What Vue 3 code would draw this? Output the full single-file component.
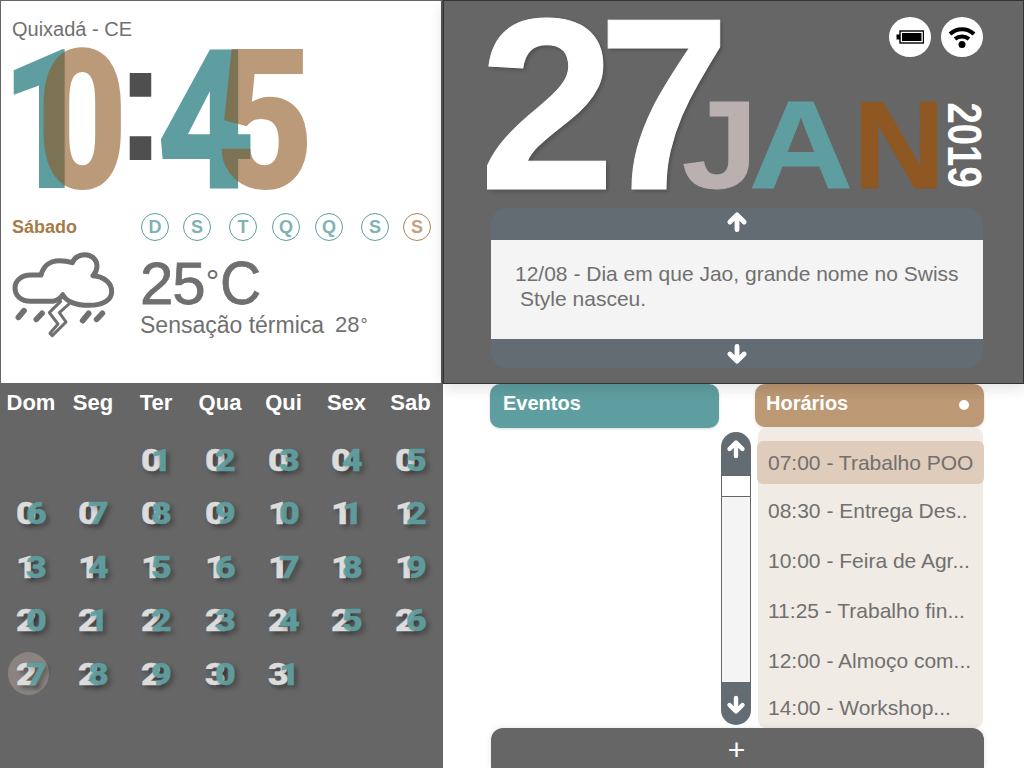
<script setup>
const clock = [
  { t: '1', c: 'teal w1' },
  { t: '0', c: 'tan w0' },
  { t: ':', c: 'colon' },
  { t: '4', c: 'teal w4' },
  { t: '5', c: 'tan w5' }
]
const days = [
  { t: 'D' }, { t: 'S' }, { t: 'T', wide: true }, { t: 'Q', mid: true },
  { t: 'Q', mid: true }, { t: 'S', wide: true }, { t: 'S', on: true }
]
const heads = ['Dom', 'Seg', 'Ter', 'Qua', 'Qui', 'Sex', 'Sab']
const cells = [null, null]
for (let i = 1; i <= 31; i++) cells.push(String(i).padStart(2, '0'))
const events = [
  '07:00 - Trabalho POO',
  '08:30 - Entrega Des..',
  '10:00 - Feira de Agr...',
  '11:25 - Trabalho fin...',
  '12:00 - Almoço com...',
  '14:00 - Workshop...'
]
</script>

<template>
  <div class="app">
    <section class="clock-panel">
      <div class="city">Quixadá - CE</div>
      <div class="clock">
        <span v-for="(d, i) in clock" :key="i" class="cd" :class="d.c"><span class="g">{{ d.t }}</span></span>
      </div>
      <div class="week">
        <span class="today">Sábado</span>
        <div class="days">
          <span v-for="(d, i) in days" :key="i" class="day" :class="{ wide: d.wide, mid: d.mid, on: d.on }">{{ d.t }}</span>
        </div>
      </div>
      <div class="weather">
        <svg class="storm" viewBox="0 0 390 300" width="130" height="100" fill="none" stroke="#707070" stroke-linecap="round" stroke-linejoin="round">
          <path stroke-width="15" d="M158 178H92C62 178 45 160 45 138C45 115 66 99 92 99H123C130 72 150 56 178 56C192 56 205 58 217 62C225 44 240 38 255 38C277 38 291 55 291 72C291 83 287 92 279 101C312 103 335 123 335 149C335 174 308 190 268 190C228 190 200 178 188 158C182 168 172 175 158 178Z"/>
          <path stroke-width="9" d="M182 178L148 212L174 246L150 274L157 281L198 240L178 212L207 186"/>
          <path stroke-width="17" d="M55 226L72 206M109 232L126 214M248 236L266 214M290 232L307 214"/>
        </svg>
        <div class="temps">
          <div class="temp">25<span class="deg">°</span><span class="cel">C</span></div>
          <div class="feel"><span>Sensação térmica</span><span class="feel-v">28<span class="feel-d">°</span></span></div>
        </div>
      </div>
    </section>

    <section class="date-panel">
      <div class="date-row">
        <div class="dn"><span class="dn-g">2</span><span class="dn-g sev">7</span></div>
        <div class="date-side">
          <div class="status">
            <span class="badge">
              <svg viewBox="0 0 28 14" width="28" height="14">
                <rect x="4" y="1" width="23.5" height="12" fill="none" stroke="#000" stroke-width="1.4"/>
                <rect x="6" y="3" width="19.5" height="8" fill="#000"/>
                <rect x="0.5" y="4.5" width="3.5" height="5" fill="#000"/>
              </svg>
            </span>
            <span class="badge">
              <svg viewBox="0 0 28 22" width="28" height="22" fill="none" stroke="#000" stroke-width="4">
                <path d="M2 8C9 1.5 19 1.5 26 8"/>
                <path d="M7 13C11 9.5 17 9.5 21 13"/>
                <circle cx="14" cy="18.5" r="3.5" fill="#000" stroke="none"/>
              </svg>
            </span>
          </div>
          <div class="month-row">
            <span class="m j"><span class="mg">J</span></span><span class="m a"><span class="mg">A</span></span><span class="m n"><span class="mg">N</span></span>
            <span class="year">2019</span>
          </div>
        </div>
      </div>
      <div class="note">
        <div class="note-bar top">
          <svg viewBox="0 0 20 20" width="22" height="22" fill="none" stroke="#fff" stroke-width="4.4" stroke-linecap="round" stroke-linejoin="round"><path d="M10 17V4M3.5 10L10 3.5L16.5 10"/></svg>
        </div>
        <div class="note-body">
          <p>12/08 - Dia em que Jao, grande nome no Swiss</p>
          <p class="indent">Style nasceu.</p>
        </div>
        <div class="note-bar bot">
          <svg viewBox="0 0 20 20" width="22" height="22" fill="none" stroke="#fff" stroke-width="4.4" stroke-linecap="round" stroke-linejoin="round"><path d="M10 3V16M3.5 10L10 16.5L16.5 10"/></svg>
        </div>
      </div>
    </section>

    <section class="cal-panel">
      <div class="cal-grid heads">
        <span v-for="h in heads" :key="h" class="head">{{ h }}</span>
      </div>
      <div class="cal-grid nums">
        <span v-for="(c, i) in cells" :key="i" class="cell">
          <span v-if="c" class="num" :class="{ cur: c === '27' }"><span class="n1">{{ c[0] }}</span><span class="n2">{{ c[1] }}</span></span>
        </span>
      </div>
    </section>

    <section class="agenda">
      <div class="cols">
        <div class="col-ev">
          <div class="tab tab-ev">Eventos</div>
          <div class="scroll">
            <div class="sb up">
              <svg viewBox="0 0 20 20" width="20" height="20" fill="none" stroke="#fff" stroke-width="4.4" stroke-linecap="round" stroke-linejoin="round"><path d="M10 17V4M3.5 10L10 3.5L16.5 10"/></svg>
            </div>
            <div class="track"><div class="thumb"></div></div>
            <div class="sb down">
              <svg viewBox="0 0 20 20" width="20" height="20" fill="none" stroke="#fff" stroke-width="4.4" stroke-linecap="round" stroke-linejoin="round"><path d="M10 3V16M3.5 10L10 16.5L16.5 10"/></svg>
            </div>
          </div>
        </div>
        <div class="col-hr">
          <div class="tab tab-hr"><span>Horários</span><i class="dot"></i></div>
          <ul class="list">
            <li v-for="(e, i) in events" :key="e" class="item" :class="{ sel: i === 0, last: i === 5 }">{{ e }}</li>
          </ul>
        </div>
      </div>
      <div class="add">+</div>
    </section>
  </div>
</template>

<style>
html, body { margin: 0; background: #fff; }
</style>

<style scoped>
.app {
  width: 1024px;
  height: 768px;
  display: grid;
  grid-template-columns: 443px 581px;
  grid-template-rows: 384px 384px;
  overflow: hidden;
  font-family: "Liberation Sans", Arial, sans-serif;
  color: #707070;
}

/* clock */
.clock-panel {
  box-sizing: border-box;
  background: #fff;
  border: 1px solid #666;
  border-right: 2px solid #555;
  padding: 16px 10px 0 11px;
}
.city { font-size: 20px; line-height: 24px; }
.clock {
  display: flex;
  height: 150px;
  margin-top: 6px;
  margin-left: -11px;
  font-family: Roboto, "Liberation Sans", sans-serif;
}
.cd { display: block; height: 150px; line-height: 150px; font-weight: 900; font-size: 195px; }
.g { display: inline-block; transform: scaleX(.8); transform-origin: 0 50%; }
.teal { color: #5f9ea0; }
.tan { color: #8f5822; opacity: .6; }
.colon { color: #4f4f4f; width: 43px; margin-left: 2px; font-family: "Liberation Sans", sans-serif; font-weight: 700; font-size: 204px; }
.colon .g { transform: scale(.75, .85) translateY(-26px); }
.w1 { width: 36px; }
.w0 { width: 76px; }
.w4 { width: 59px; margin-left: -2px; }
.w4 .g, .w5 .g { transform: scaleX(.88); }
.w5 { width: 90px; }

.week {
  display: flex;
  align-items: center;
  justify-content: space-between;
  margin-top: 16px;
  height: 28px;
}
.today { font-size: 18px; font-weight: 700; color: #a87a48; }
.days { display: flex; gap: 14px; }
.day {
  box-sizing: border-box;
  width: 28px;
  height: 28px;
  border: 1px solid #5f9ea0;
  border-radius: 50%;
  display: flex;
  align-items: center;
  justify-content: center;
  font-size: 18px;
  font-weight: 700;
  color: #7fb3b4;
}
.day.wide { margin-left: 4px; }
.day.mid { margin-left: 1px; }
.day.on { border-color: #b08350; color: #c3a180; }

.weather { display: flex; margin-top: 1px; }
.storm { margin: 0 0 0 -12px; flex: none; }
.temps { margin-left: 10px; padding-top: 13px; }
.temp { font-size: 60px; line-height: 56px; letter-spacing: -1px; color: #6f6f6f; -webkit-text-stroke: .8px #6f6f6f; white-space: nowrap; }
.deg { font-size: 34px; position: relative; top: -11px; margin-left: 1px; letter-spacing: 1px; -webkit-text-stroke: 0; }
.cel { display: inline-block; transform: scaleX(.92); transform-origin: 0 50%; font-size: 62px; }
.feel { font-size: 23px; line-height: 26px; display: flex; gap: 11px; margin-top: -8px; white-space: nowrap; }
.feel-v { font-size: 22px; }
.feel-d { font-size: 18px; position: relative; top: -1px; margin-left: 1px; }

/* date */
.date-panel {
  box-sizing: border-box;
  background: #666;
  border: 1px solid #333;
  padding: 0 40px 0 47px;
  box-shadow: 0 4px 14px rgba(0, 0, 0, .12);
  position: relative;
  z-index: 1;
}
.date-row { display: flex; height: 207px; margin-left: -12px; }
.dn { display: flex; font-weight: 700; font-size: 245px; color: #fff; height: 190px; line-height: 190px; padding-top: 8px; text-shadow: 2px 2px 4px rgba(0,0,0,.25); -webkit-text-stroke: 1px #fff; }
.dn-g { display: block; width: 119px; }
.sev { transform: scaleX(.97); transform-origin: 0 50%; }
.date-side { flex: 1; min-width: 0; }
.status { display: flex; justify-content: flex-end; gap: 10px; margin-top: 16px; }
.badge { width: 42px; height: 40px; border-radius: 50%; background: #fff; display: flex; align-items: center; justify-content: center; }
.month-row { display: flex; align-items: flex-end; margin-top: 32px; margin-left: -35px; height: 112px; font-weight: 700; font-size: 124px; line-height: 112px; -webkit-text-stroke: 1px; }
.m { display: block; flex: none; }
.mg { display: inline-block; transform-origin: 0 50%; }
.j { color: #bab0b0; width: 67px; }
.j .mg { transform: scaleX(1.1); }
.a { color: #5f9ea0; width: 104px; }
.a .mg { transform: scaleX(1.16); }
.n { color: #8f5822; width: 92px; }
.n .mg { transform: scaleX(1.03); }
.year { flex: none; writing-mode: vertical-rl; font-size: 48px; color: #fff; line-height: 38px; -webkit-text-stroke: 0; height: 112px; transform: scaleY(.8); transform-origin: 0 100%; margin-left: 0; margin-bottom: 9px; }

.note { width: 492px; }
.note-bar { background: #636b73; display: flex; justify-content: center; align-items: center; }
.note-bar.top { height: 32px; box-sizing: border-box; padding-bottom: 5px; border-radius: 16px 16px 0 0; }
.note-bar.bot { height: 29px; border-radius: 0 0 16px 16px; }
.note-body { background: #f4f4f4; height: 99px; box-sizing: border-box; padding: 21px 0 0 24px; font-size: 21px; line-height: 25px; }
.note-body p { margin: 0; white-space: nowrap; }
.indent { padding-left: 5px; }

/* calendar */
.cal-panel { background: #666; padding-top: 7px; }
.cal-grid { display: grid; grid-template-columns: 62px 62px 64px 64px 63px 63px 65px; }
.head { text-align: center; font-size: 22px; font-weight: 700; color: #fff; line-height: 24px; white-space: nowrap; }
.nums { margin-top: 18px; grid-auto-rows: 53.5px; font-family: Roboto, "Liberation Sans", sans-serif; }
.cell { display: flex; justify-content: center; align-items: center; margin-left: -3px; }
.num { display: flex; width: 28px; height: 28px; justify-content: flex-start; font-weight: 900; font-size: 32px; line-height: 28px; position: relative; }
.n1, .n2 { display: inline-block; transform: scaleX(1.12); transform-origin: 0 50%; }
.n1 { width: 10.5px; color: #dcdcdc; -webkit-text-stroke: .4px #dcdcdc; text-shadow: 3px 3px 5px rgba(0,0,0,.4); }
.n2 { color: #5f9ea0; opacity: .95; -webkit-text-stroke: .4px #5f9ea0; text-shadow: 3px 3px 5px rgba(0,0,0,.3); }
.cur::before {
  content: "";
  position: absolute;
  left: -8px;
  top: -8px;
  width: 41px;
  height: 43px;
  border-radius: 50%;
  background: #8a8380;
  z-index: 0;
}
.cur .n1, .cur .n2 { position: relative; }

/* agenda */
.agenda { background: #fff; display: flex; flex-direction: column; padding-left: 47px; padding-right: 40px; }
.cols { display: flex; height: 344px; }
.col-ev { width: 265px; }
.col-hr { width: 229px; }
.tab { box-sizing: border-box; font-size: 20px; font-weight: 700; color: #fff; border-radius: 10px; display: flex; align-items: flex-start; line-height: 38px; box-shadow: 0 1px 3px rgba(0,0,0,.15); }
.tab-ev { width: 229px; height: 44px; background: #5f9ea0; padding-left: 13px; }
.tab-hr { height: 43px; background: #bc9874; padding: 0 15px 0 11px; justify-content: space-between; }
.dot { width: 10px; height: 10px; border-radius: 50%; background: #fff; margin-top: 16px; }

.scroll { width: 30px; margin: 4px 0 0 231px; display: flex; flex-direction: column; }
.sb { background: #636b73; display: flex; justify-content: center; height: 43px; }
.sb svg { margin-top: 7px; }
.sb.up { border-radius: 15px 15px 0 0; }
.sb.down { border-radius: 0 0 15px 15px; }
.sb.down svg { margin-top: 13px; }
.track { box-sizing: border-box; height: 207px; background: #f4f4f4; border: 1px solid #666; border-bottom-width: 0; }
.thumb { height: 20px; background: #fff; border-bottom: 1px solid #666; }

.list {
  list-style: none;
  margin: 1px 1px 0 3px;
  padding: 13px 0 0;
  height: 300px;
  box-sizing: border-box;
  background: #f0ebe5;
  border-radius: 8px;
}
.item { height: 50px; line-height: 43px; font-size: 21px; padding-left: 10px; white-space: nowrap; }
.item.sel { height: 43px; line-height: 43px; margin: 0 -1px 5px -1px; padding-left: 11px; background: #dfccbb; border-radius: 6px; }
.item.last { margin-top: -3px; }

.add {
  height: 40px;
  width: 493px;
  margin-left: 1px;
  box-sizing: border-box;
  padding-right: 2px;
  background: #666;
  border-radius: 12px 12px 0 0;
  color: #fff;
  text-align: center;
  font-size: 30px;
  line-height: 43px;
  box-shadow: 0 0 6px rgba(0,0,0,.1);
}
</style>
